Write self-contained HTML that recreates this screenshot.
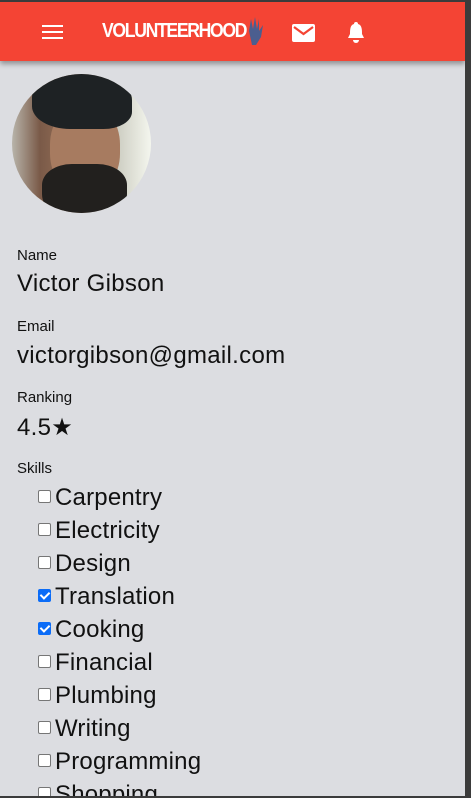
<!DOCTYPE html>
<html><head><meta charset="utf-8"><style>
*{margin:0;padding:0;box-sizing:border-box}
html,body{width:471px;height:798px;overflow:hidden;background:#3b3b3b;font-family:"Liberation Sans","DejaVu Sans",sans-serif}
#app{position:absolute;left:0;top:2px;width:465px;height:794px;background:#dcdde1;overflow:hidden}
.hdr{position:absolute;left:0;top:0;width:465px;height:59px;background:#f44434;box-shadow:0 3px 5px rgba(0,0,0,.35)}
.av{position:absolute;left:12px;top:72px;width:139px;height:139px;border-radius:50%;overflow:hidden;background:linear-gradient(90deg,#b8b4aa 0,#7a5a48 20%,#9a7258 45%,#c4c4b8 70%,#f4f6ee 100%)}
.face{position:absolute;left:38px;top:30px;width:70px;height:90px;background:#a77b60;border-radius:45%}
.hair{position:absolute;left:20px;top:-5px;width:100px;height:60px;background:#1e2224;border-radius:50% 55% 30% 40%}
.beard{position:absolute;left:30px;top:90px;width:85px;height:60px;background:#22201e;border-radius:35% 35% 50% 50%}
.lbl{position:absolute;left:17px;font-size:15px;color:#111}
.val{position:absolute;left:17px;font-size:24px;color:#111;letter-spacing:0.3px}
.sk{position:absolute;left:38px;font-size:24px;color:#111;white-space:nowrap;letter-spacing:0.2px}
.cb{display:inline-block;width:13px;height:13px;border:1px solid #767676;border-radius:2px;background:#fff;vertical-align:middle;margin-right:4px;position:relative;top:-2px}
.cb.on{background:#0b6cf7;border-color:#0b6cf7}
.cb.on:after{content:"";position:absolute;left:3px;top:0px;width:4px;height:7px;border:solid #fff;border-width:0 2px 2px 0;transform:rotate(45deg)}
</style></head><body>
<div id="app">
<div class="hdr">
 <svg style="position:absolute;left:42px;top:23px" width="21" height="14"><rect y="0" width="21" height="2" fill="#fff"/><rect y="6" width="21" height="2" fill="#fff"/><rect y="12" width="21" height="2" fill="#fff"/></svg>
 <div style="position:absolute;left:102px;top:18px;color:#fff;font-weight:bold;font-size:20px;letter-spacing:-1.5px;transform:scaleX(.88);transform-origin:left">VOLUNTEERHOOD</div>
 <svg style="position:absolute;left:246px;top:13px" width="20" height="32"><path d="M6 30 L3 16 L5 4 L7 14 L9 2 L11 14 L13 4 L13 16 L17 10 L15 22 L10 30Z" fill="#4b5e8f"/></svg>
 <svg style="position:absolute;left:292px;top:22px" width="23" height="18"><rect width="23" height="18" rx="2" fill="#fff"/><path d="M2 3 L11.5 10 L21 3" stroke="#f44434" stroke-width="2.2" fill="none"/></svg>
 <svg style="position:absolute;left:346px;top:19px" width="20" height="23"><path d="M10 1 a2 2 0 0 1 2 2 C16 4 16 9 16 13 L18 17 L2 17 L4 13 C4 9 4 4 8 3 a2 2 0 0 1 2-2Z" fill="#fff"/><path d="M7 19 a3 3 0 0 0 6 0Z" fill="#fff"/></svg>
</div>
<div class="av"><div class="face"></div><div class="hair"></div><div class="beard"></div></div>
<div class="lbl" style="top:245px">Name</div>
<div class="val" style="top:268px">Victor Gibson</div>
<div class="lbl" style="top:316px">Email</div>
<div class="val" style="top:340px">victorgibson@gmail.com</div>
<div class="lbl" style="top:387px">Ranking</div>
<div class="val" style="top:411px">4.5★</div>
<div class="lbl" style="top:458px">Skills</div>
<div class="sk" style="top:482px"><span class="cb"></span>Carpentry</div>
<div class="sk" style="top:515px"><span class="cb"></span>Electricity</div>
<div class="sk" style="top:548px"><span class="cb"></span>Design</div>
<div class="sk" style="top:581px"><span class="cb on"></span>Translation</div>
<div class="sk" style="top:614px"><span class="cb on"></span>Cooking</div>
<div class="sk" style="top:647px"><span class="cb"></span>Financial</div>
<div class="sk" style="top:680px"><span class="cb"></span>Plumbing</div>
<div class="sk" style="top:713px"><span class="cb"></span>Writing</div>
<div class="sk" style="top:746px"><span class="cb"></span>Programming</div>
<div class="sk" style="top:779px"><span class="cb"></span>Shopping</div>
</div>
</body></html>
